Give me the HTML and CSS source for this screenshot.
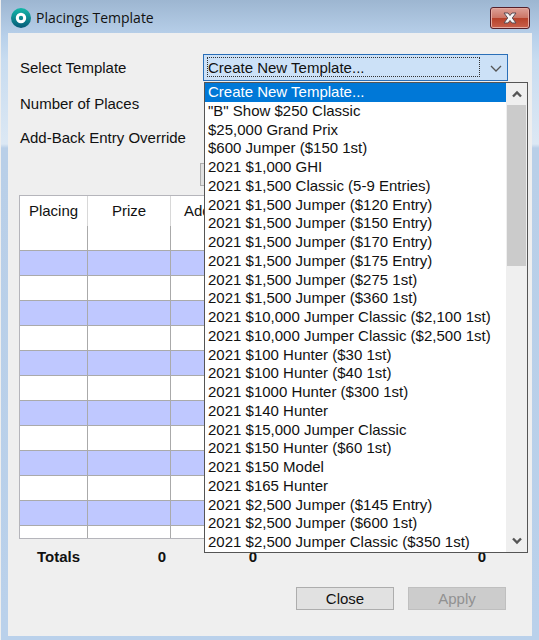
FILE: index.html
```html
<!DOCTYPE html>
<html lang="en">
<head>
<meta charset="utf-8">
<title>Placings Template</title>
<link rel="stylesheet" href="styles.css">
</head>
<body>
<div class="window">
  <header class="titlebar">
    <svg class="logo" viewBox="0 0 20 20" aria-hidden="true">
      <defs><linearGradient id="teal" x1="0" y1="0" x2="0" y2="1"><stop offset="0" stop-color="#12b8a8"/><stop offset="1" stop-color="#075a78"/></linearGradient></defs>
      <circle cx="10" cy="10" r="10" fill="url(#teal)"/>
      <circle cx="10" cy="10" r="3.7" fill="none" stroke="#fff" stroke-width="3"/>
    </svg>
    <h1 class="title">Placings Template</h1>
    <button class="close" type="button" aria-label="Close window">
      <svg viewBox="0 0 14 12" aria-hidden="true"><path d="M1 1h4l2 2.5L9 1h4L9.300 6 13 11H9L7 8.500 5 11H1l3.700-5z" fill="#f6f6f6" stroke="#5a4a52" stroke-width="1"/></svg>
    </button>
  </header>
  <main class="content">
    <form class="form">
      <label for="template">Select Template</label>
      <div class="combo">
        <select id="template" class="select"><option>Create New Template...</option></select>
        <span class="focus"></span>
        <svg class="chevron" viewBox="0 0 12 8" aria-hidden="true"><path d="M1 1l5 5 5-5" fill="none" stroke="#555" stroke-width="1.300"/></svg>
        <div class="popup">
          <ul class="options" role="listbox" aria-label="Templates">
            <li role="option" aria-selected="true" class="selected">Create New Template...</li>
            <li role="option">"B" Show $250 Classic</li>
            <li role="option">$25,000 Grand Prix</li>
            <li role="option">$600 Jumper ($150 1st)</li>
            <li role="option">2021 $1,000 GHI</li>
            <li role="option">2021 $1,500 Classic (5-9 Entries)</li>
            <li role="option">2021 $1,500 Jumper ($120 Entry)</li>
            <li role="option">2021 $1,500 Jumper ($150 Entry)</li>
            <li role="option">2021 $1,500 Jumper ($170 Entry)</li>
            <li role="option">2021 $1,500 Jumper ($175 Entry)</li>
            <li role="option">2021 $1,500 Jumper ($275 1st)</li>
            <li role="option">2021 $1,500 Jumper ($360 1st)</li>
            <li role="option">2021 $10,000 Jumper Classic ($2,100 1st)</li>
            <li role="option">2021 $10,000 Jumper Classic ($2,500 1st)</li>
            <li role="option">2021 $100 Hunter ($30 1st)</li>
            <li role="option">2021 $100 Hunter ($40 1st)</li>
            <li role="option">2021 $1000 Hunter ($300 1st)</li>
            <li role="option">2021 $140 Hunter</li>
            <li role="option">2021 $15,000 Jumper Classic</li>
            <li role="option">2021 $150 Hunter ($60 1st)</li>
            <li role="option">2021 $150 Model</li>
            <li role="option">2021 $165 Hunter</li>
            <li role="option">2021 $2,500 Jumper ($145 Entry)</li>
            <li role="option">2021 $2,500 Jumper ($600 1st)</li>
            <li role="option">2021 $2,500 Jumper Classic ($350 1st)</li>
          </ul>
          <div class="scrollbar">
            <svg class="arrow" viewBox="0 0 12 8" aria-hidden="true"><path d="M2 6.500l4-4 4 4" fill="none" stroke="#555" stroke-width="2.400"/></svg>
            <div class="thumb"></div>
            <svg class="arrow" viewBox="0 0 12 8" aria-hidden="true"><path d="M2 1.500l4 4 4-4" fill="none" stroke="#555" stroke-width="2.400"/></svg>
          </div>
        </div>
      </div>
      <label for="places">Number of Places</label>
      <input id="places" class="field" type="text">
      <label for="override">Add-Back Entry Override</label>
      <input id="override" class="field" type="text">
    </form>
    <div class="tools"><button class="button wide" type="button" aria-label="Fill"></button></div>
    <div class="grid">
      <table class="table">
        <colgroup><col class="c1"><col class="c2"><col class="c3"><col></colgroup>
        <thead><tr><th>Placing</th><th>Prize</th><th>Add-Back</th><th></th></tr></thead>
        <tbody>
          <tr><td></td><td></td><td></td><td></td></tr>
          <tr><td></td><td></td><td></td><td></td></tr>
          <tr><td></td><td></td><td></td><td></td></tr>
          <tr><td></td><td></td><td></td><td></td></tr>
          <tr><td></td><td></td><td></td><td></td></tr>
          <tr><td></td><td></td><td></td><td></td></tr>
          <tr><td></td><td></td><td></td><td></td></tr>
          <tr><td></td><td></td><td></td><td></td></tr>
          <tr><td></td><td></td><td></td><td></td></tr>
          <tr><td></td><td></td><td></td><td></td></tr>
          <tr><td></td><td></td><td></td><td></td></tr>
          <tr><td></td><td></td><td></td><td></td></tr>
          <tr><td></td><td></td><td></td><td></td></tr>
        </tbody>
      </table>
    </div>
    <div class="totals"><span class="name">Totals</span><span>0</span><span>0</span><span>0</span></div>
    <footer class="actions">
      <button class="button" type="button">Close</button>
      <button class="button" type="button" disabled>Apply</button>
    </footer>
  </main>
</div>
</body>
</html>
```
FILE: styles.css
```css
* { box-sizing: border-box; }

body {
  margin: 0;
  font: 15px/20px "Liberation Sans", Arial, sans-serif;
  color: #111;
}

.window {
  display: flex;
  flex-direction: column;
  min-height: 100vh;
  padding: 0 7px 4px;
  border-left: 1px solid #eee;
  background: linear-gradient(#9db6d1, #b8d0ea 36px, #c8dcf0 60px, #dce8f4 144px, #b9cfe8 148px, #bad1eb);
}

.titlebar {
  display: flex;
  align-items: center;
  gap: 5px;
  height: 33px;
  padding: 3px 2px 0 3px;
}

.logo { width: 20px; height: 20px; }

.title {
  flex: 1;
  margin: 0;
  font: 14px/20px "Open Sans", "Noto Sans", sans-serif;
}

.close {
  display: grid;
  place-items: center;
  width: 40px;
  height: 22px;
  padding: 0;
  border: 1px solid #55202a;
  border-radius: 3px;
  background: linear-gradient(#dda097, #cc7666 48%, #b64029 50%, #c9604c);
  box-shadow: inset 0 0 0 1px #e5aaa0;
}

.close svg { width: 14px; height: 12px; }

.content {
  flex: 1;
  padding: 21px 24px 0 11px;
  background: #efefef;
}

.form {
  display: grid;
  grid-template-columns: 184px 1fr;
  grid-template-rows: 27px 22px 22px;
  row-gap: 12px;
  align-items: center;
}

.form label { padding-left: 1px; }

.combo { position: relative; height: 27px; }

.select {
  display: block;
  width: 100%;
  height: 27px;
  padding: 0 4px;
  border: 1px solid #2a6fb8;
  border-radius: 0;
  outline: none;
  appearance: none;
  background: #cce1f7;
  font: inherit;
  color: inherit;
}

.focus {
  position: absolute;
  inset: 3px 28px 4px 4px;
  border: 1px dotted #333;
  pointer-events: none;
}

.chevron {
  position: absolute;
  top: 11px;
  right: 6px;
  width: 12px;
  height: 8px;
  pointer-events: none;
}

.popup {
  position: absolute;
  z-index: 1;
  top: 28px;
  left: 1px;
  right: -20px;
  display: flex;
  height: 471px;
  border: 1px solid #555;
  background: #fff;
}

.options {
  flex: 1;
  display: grid;
  grid-auto-rows: 1fr;
  margin: 0;
  padding: 0;
  list-style: none;
  line-height: 18px;
  white-space: nowrap;
}

.options li { padding-left: 3px; }

.options .selected { background: #0078d7; color: #fff; }

.scrollbar {
  display: flex;
  flex-direction: column;
  align-items: center;
  width: 21px;
  padding: 0 1px;
  background: #efefef;
}

.arrow { width: 12px; height: 8px; margin: 7px 0; }

.thumb {
  width: 100%;
  height: 161px;
  margin-bottom: auto;
  background: #cbcbcb;
}

.field {
  width: 60px;
  height: 22px;
  margin-left: 2px;
  border: 1px solid #aaa;
}

.tools { padding: 14px 0 0 181px; }

.button {
  width: 98px;
  height: 23px;
  padding: 0;
  border: 1px solid #adadad;
  background: #e1e1e1;
  font: inherit;
  color: inherit;
}

.button:disabled { border-color: #bfbfbf; background: #ccc; color: #919191; }

.tools .wide { display: block; }

.grid {
  height: 344px;
  margin-top: 9px;
  overflow: hidden;
  border: 1px solid #b5b5bb;
  background: #fff;
}

.table {
  width: 100%;
  table-layout: fixed;
  border-collapse: separate;
  border-spacing: 0;
}

.c1 { width: 68px; }
.c2 { width: 83px; }
.c3 { width: 92px; }

.table th {
  height: 30px;
  padding: 0;
  border-right: 1px solid #d8d8d8;
  font-weight: normal;
}

.table td {
  height: 25px;
  padding: 0;
  border-right: 1px solid #aaa;
  border-bottom: 1px solid #aaa;
}

.table tbody tr:nth-child(even) { background: #bfc8ff; }

.totals {
  display: grid;
  grid-template-columns: 69px 78px 91px 1fr;
  padding: 8px 22px 0 0;
  font-weight: bold;
  text-align: right;
}

.totals .name { padding-right: 8px; }

.actions {
  display: flex;
  justify-content: flex-end;
  gap: 14px;
  padding: 20px 2px 26px 0;
}
```
